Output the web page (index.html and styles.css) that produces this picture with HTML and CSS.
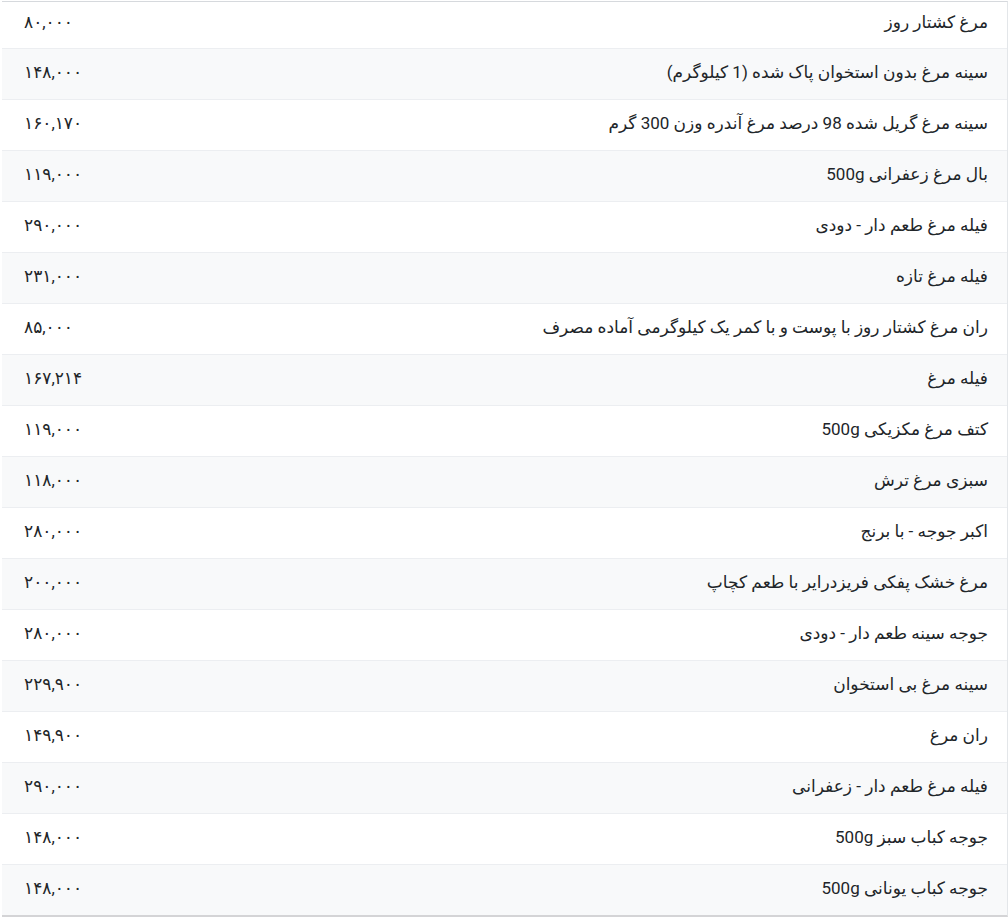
FILE: index.html
```html
<!DOCTYPE html>
<html lang="fa" dir="rtl">
<head>
<meta charset="utf-8">
<title>قیمت مرغ</title>
<link rel="stylesheet" href="styles.css">
</head>
<body>
<div class="wrap">
<table class="prices">
<tbody>
<tr><td class="name">مرغ کشتار روز</td><td class="price">۸۰,۰۰۰</td></tr>
<tr><td class="name">سینه مرغ بدون استخوان پاک شده (1 کیلوگرم)</td><td class="price">۱۴۸,۰۰۰</td></tr>
<tr><td class="name">سینه مرغ گریل شده 98 درصد مرغ آندره وزن 300 گرم</td><td class="price">۱۶۰,۱۷۰</td></tr>
<tr><td class="name">بال مرغ زعفرانی 500g</td><td class="price">۱۱۹,۰۰۰</td></tr>
<tr><td class="name">فیله مرغ طعم دار - دودی</td><td class="price">۲۹۰,۰۰۰</td></tr>
<tr><td class="name">فیله مرغ تازه</td><td class="price">۲۳۱,۰۰۰</td></tr>
<tr><td class="name">ران مرغ کشتار روز با پوست و با کمر یک کیلوگرمی آماده مصرف</td><td class="price">۸۵,۰۰۰</td></tr>
<tr><td class="name">فیله مرغ</td><td class="price">۱۶۷,۲۱۴</td></tr>
<tr><td class="name">کتف مرغ مکزیکی 500g</td><td class="price">۱۱۹,۰۰۰</td></tr>
<tr><td class="name">سبزی مرغ ترش</td><td class="price">۱۱۸,۰۰۰</td></tr>
<tr><td class="name">اکبر جوجه - با برنج</td><td class="price">۲۸۰,۰۰۰</td></tr>
<tr><td class="name">مرغ خشک پفکی فریزدرایر با طعم کچاپ</td><td class="price">۲۰۰,۰۰۰</td></tr>
<tr><td class="name">جوجه سینه طعم دار - دودی</td><td class="price">۲۸۰,۰۰۰</td></tr>
<tr><td class="name">سینه مرغ بی استخوان</td><td class="price">۲۲۹,۹۰۰</td></tr>
<tr><td class="name">ران مرغ</td><td class="price">۱۴۹,۹۰۰</td></tr>
<tr><td class="name">فیله مرغ طعم دار - زعفرانی</td><td class="price">۲۹۰,۰۰۰</td></tr>
<tr><td class="name">جوجه کباب سبز 500g</td><td class="price">۱۴۸,۰۰۰</td></tr>
<tr><td class="name">جوجه کباب یونانی 500g</td><td class="price">۱۴۸,۰۰۰</td></tr>
</tbody>
</table>
</div>
</body>
</html>
```
FILE: styles.css
```css
html, body {
  margin: 0;
  padding: 0;
  background: #ffffff;
}
body {
  font-family: Roboto, "DejaVu Sans", sans-serif;
  font-size: 17px;
  color: #212529;
}
.wrap {
  width: 1006px;
  margin-top: 1px;
  border-top: 1px solid #d6d9dd;
  border-right: 1px solid #e3e6e9;
  border-bottom: 2px solid #d4d4d6;
  box-sizing: border-box;
}
.prices {
  width: 100%;
  border-collapse: collapse;
  direction: rtl;
}
.prices td {
  height: 51px;
  padding: 0 0 3px 0;
  border-bottom: 1px solid #eceef1;
  line-height: 24px;
  vertical-align: middle;
  box-sizing: border-box;
}
.prices tr:first-child td {
  height: 46px;
  padding-bottom: 5px;
}
.prices tr:last-child td {
  border-bottom: 0;
}
.prices tr:nth-child(even) td {
  background: #f8f9fa;
}
.prices td.name {
  text-align: right;
  padding-right: 19px;
}
.prices td.price {
  text-align: left;
  padding-left: 22px;
  width: 160px;
  white-space: nowrap;
}
```
